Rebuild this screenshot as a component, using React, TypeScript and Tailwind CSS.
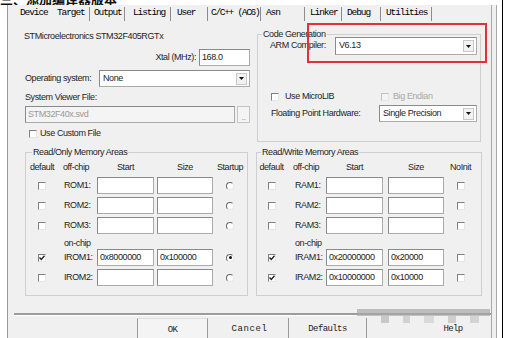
import React from "react";

const tabs = [
  { label: "Device", cls: "w-[37px]", sep: false },
  { label: "Target", cls: "w-[32px]", sep: true },
  { label: "Output", cls: "w-[34px] pl-[4px]", sep: true },
  { label: "Listing", cls: "w-[45px] pl-[8px]", sep: true },
  { label: "User", cls: "w-[36px] pl-[6px]", sep: true },
  { label: "C/C++ (AC6)", cls: "w-[52px] pl-[3px] tracking-[-1.3px]", sep: true },
  { label: "Asn", cls: "w-[43px] pl-[5px]", sep: true },
  { label: "Linker", cls: "w-[36px] pl-[5px]", sep: true },
  { label: "Debug", cls: "w-[38px] pl-[5px]", sep: true },
  { label: "Utilities", cls: "w-[50px] pl-[5px]", sep: true },
];

const romRows = [
  { name: "ROM1:", start: "", size: "", on: false, startup: false },
  { name: "ROM2:", start: "", size: "", on: false, startup: false },
  { name: "ROM3:", start: "", size: "", on: false, startup: false },
];
const iromRows = [
  { name: "IROM1:", start: "0x8000000", size: "0x100000", on: true, startup: true },
  { name: "IROM2:", start: "", size: "", on: false, startup: false },
];
const ramRows = [
  { name: "RAM1:", start: "", size: "", on: false },
  { name: "RAM2:", start: "", size: "", on: false },
  { name: "RAM3:", start: "", size: "", on: false },
];
const iramRows = [
  { name: "IRAM1:", start: "0x20000000", size: "0x20000", on: true },
  { name: "IRAM2:", start: "0x10000000", size: "0x10000", on: true },
];

function Check({ on = false, disabled = false }: { on?: boolean; disabled?: boolean }) {
  return (
    <div
      className={`w-[8px] h-[8px] border border-t-[#808080] border-l-[#808080] border-r-[#e6e6e6] border-b-[#e6e6e6] flex items-center justify-center ${
        disabled ? "bg-[#f4f4f4] border-t-[#c0c0c0] border-l-[#c0c0c0]" : "bg-white"
      }`}
    >
      {on && (
        <svg width="6" height="6" viewBox="0 0 6 6">
          <path d="M0.5 2.5 L2.3 4.5 L5.5 0.8" stroke="#222" strokeWidth="1.4" fill="none" />
        </svg>
      )}
    </div>
  );
}

function Radio({ on = false }: { on?: boolean }) {
  return (
    <div className="w-[8px] h-[8px] rounded-full border border-t-[#6a6a6a] border-l-[#6a6a6a] border-r-[#e8e8e8] border-b-[#e8e8e8] bg-white flex items-center justify-center">
      {on && <div className="w-[3px] h-[3px] rounded-full bg-[#111]" />}
    </div>
  );
}

function Field({ value = "", cls = "", muted = false }: { value?: string; cls?: string; muted?: boolean }) {
  return (
    <div
      className={`h-[17px] border border-[#ababab] border-t-[#8a8a8a] border-l-[#8a8a8a] flex items-center pl-[2px] ${
        muted ? "bg-[#f4f4f4] text-[#9a9a9a]" : "bg-white text-[#1a1a1a]"
      } ${cls}`}
    >
      {value}
    </div>
  );
}

function Drop({ value, cls }: { value: string; cls: string }) {
  return (
    <div className={`border border-[#ababab] border-t-[#8a8a8a] border-l-[#8a8a8a] bg-white flex items-center pl-[3px] pr-[2px] ${cls}`}>
      <span className="flex-1">{value}</span>
      <div className="w-[11px] h-[12px] border border-[#c8c8c8] bg-[#f2f2f2] flex items-center justify-center">
        <svg width="5" height="3" viewBox="0 0 5 3">
          <path d="M0 0 H5 L2.5 3 Z" fill="#111" />
        </svg>
      </div>
    </div>
  );
}

export default function App() {
  return (
    <div className="w-[507px] h-[338px] bg-white flex overflow-hidden relative font-['Liberation_Sans',Arial,sans-serif] text-[9px] tracking-[-0.4px] text-[#1e1e1e]">
      <div className="w-[502px] h-[338px] flex flex-col">
        {/* cut-off caption above the screenshot */}
        <div className="h-[5px] shrink-0 overflow-hidden flex items-end">
          <span className="font-['Noto_Sans_CJK_SC',sans-serif] text-[13px] leading-[13px] font-bold tracking-[0px] text-[#111] whitespace-nowrap">
            三、添加编译器版本
          </span>
        </div>

        <div className="h-[333px] shrink-0 flex">
          <div className="w-[7px]" />
          <div className="w-[484px] h-[333px] bg-[#f0f0f0] border-l border-[#9a9a9a] flex flex-col overflow-hidden">
            {/* tabs */}
            <div className="h-[17px] shrink-0 flex items-center pl-[12px] font-['Liberation_Mono',monospace] text-[9.5px] tracking-[-1.1px] text-[#000]">
              {tabs.map((t) => (
                <React.Fragment key={t.label}>
                  <span className={`${t.cls} whitespace-nowrap`}>{t.label}</span>
                  {t.sep && <div className="w-px h-[14px] bg-[#8c8c8c]" />}
                </React.Fragment>
              ))}
            </div>

            {/* tab page */}
            <div className="h-[291px] shrink-0 pl-[16px] flex flex-col">
              <div className="flex gap-[7px]">
                <div className="w-[226px] flex flex-col">
                  <div className="mt-[9px] h-[12px] flex items-center">STMicroelectronics STM32F405RGTx</div>
                  <div className="mt-[6px] flex items-center justify-end">
                    <span className="mr-[3px]">Xtal (MHz):</span>
                    <Field value="168.0" cls="w-[51px]" />
                  </div>
                  <div className="mt-[4px] flex items-center pl-[1px]">
                    <span className="w-[74px]">Operating system:</span>
                    <Drop value="None" cls="w-[151px] h-[17px]" />
                  </div>
                  <div className="mt-[5px] h-[12px] flex items-center pl-[1px]">System Viewer File:</div>
                  <div className="mt-[2px] flex items-center pl-[1px]">
                    <Field value="STM32F40x.svd" muted cls="w-[210px]" />
                    <div className="ml-[2px] w-[13px] h-[17px] border border-[#c4c4c4] bg-[#f4f4f4] flex items-end justify-center text-[#999] leading-[10px]">
                      ..
                    </div>
                  </div>
                  <div className="mt-[5px] h-[12px] flex items-center pl-[5px]">
                    <Check />
                    <span className="ml-[3px]">Use Custom File</span>
                  </div>
                </div>

                <fieldset className="w-[224px] mt-[7px] border border-[#cfcfcf] pb-[19px]">
                  <legend className="ml-[4px] px-[1px] leading-[10px]">Code Generation</legend>
                  <div className="-mt-[2px] flex items-center pl-[12px]">
                    <span className="w-[65px]">ARM Compiler:</span>
                    <Drop value="V6.13" cls="w-[142px] h-[18px]" />
                  </div>
                  <div className="mt-[36px] h-[12px] flex items-center pl-[13px]">
                    <div className="w-[110px] flex items-center">
                      <Check />
                      <span className="ml-[6px]">Use MicroLIB</span>
                    </div>
                    <Check disabled />
                    <span className="ml-[4px] text-[#a8a8a8]">Big Endian</span>
                  </div>
                  <div className="mt-[2px] flex items-center pl-[13px]">
                    <span className="w-[108px]">Floating Point Hardware:</span>
                    <Drop value="Single Precision" cls="w-[98px] h-[17px]" />
                  </div>
                </fieldset>
              </div>

              <div className="flex mt-[4px]">
                <fieldset className="ml-[1px] w-[223px] border border-[#cfcfcf] pb-[9px]">
                  <legend className="ml-[6px] px-[1px] leading-[12px]">Read/Only Memory Areas</legend>
                  <div className="mt-[3px] h-[13px] grid grid-cols-[32px_39px_60px_56px_34px] items-center">
                    <span className="text-center">default</span>
                    <span className="pl-[5px]">off-chip</span>
                    <span className="text-center pr-[3px]">Start</span>
                    <span className="text-center">Size</span>
                    <span className="text-center">Startup</span>
                  </div>
                  {romRows.map((r) => (
                    <div key={r.name} className="mt-[3px] h-[17px] grid grid-cols-[32px_39px_60px_56px_34px] items-center">
                      <div className="flex justify-center"><Check on={r.on} /></div>
                      <span className="pl-[6px]">{r.name}</span>
                      <Field value={r.start} cls="w-[57px]" />
                      <Field value={r.size} cls="w-[56px]" />
                      <div className="flex justify-center"><Radio on={r.startup} /></div>
                    </div>
                  ))}
                  <div className="mt-[4px] h-[11px] flex items-center pl-[38px]">on-chip</div>
                  {iromRows.map((r, i) => (
                    <div key={r.name} className={`${i ? "mt-[3px]" : ""} h-[17px] grid grid-cols-[32px_39px_60px_56px_34px] items-center`}>
                      <div className="flex justify-center"><Check on={r.on} /></div>
                      <span className="pl-[6px]">{r.name}</span>
                      <Field value={r.start} cls="w-[57px]" />
                      <Field value={r.size} cls="w-[56px]" />
                      <div className="flex justify-center"><Radio on={r.startup} /></div>
                    </div>
                  ))}
                </fieldset>

                <fieldset className="ml-[8px] w-[226px] border border-[#cfcfcf] pb-[9px]">
                  <legend className="ml-[4px] px-[1px] leading-[12px]">Read/Write Memory Areas</legend>
                  <div className="mt-[3px] h-[13px] grid grid-cols-[29px_40px_62px_56px_33px] items-center">
                    <span className="text-center">default</span>
                    <span className="pl-[7px]">off-chip</span>
                    <span className="text-center pr-[5px]">Start</span>
                    <span className="text-center">Size</span>
                    <span className="text-center">NoInit</span>
                  </div>
                  {ramRows.map((r) => (
                    <div key={r.name} className="mt-[3px] h-[17px] grid grid-cols-[29px_40px_62px_56px_33px] items-center">
                      <div className="flex justify-center"><Check on={r.on} /></div>
                      <span className="pl-[9px]">{r.name}</span>
                      <Field value={r.start} cls="w-[57px]" />
                      <Field value={r.size} cls="w-[56px]" />
                      <div className="flex justify-center"><Check /></div>
                    </div>
                  ))}
                  <div className="mt-[4px] h-[11px] flex items-center pl-[38px]">on-chip</div>
                  {iramRows.map((r, i) => (
                    <div key={r.name} className={`${i ? "mt-[3px]" : ""} h-[17px] grid grid-cols-[29px_40px_62px_56px_33px] items-center`}>
                      <div className="flex justify-center"><Check on={r.on} /></div>
                      <span className="pl-[9px]">{r.name}</span>
                      <Field value={r.start} cls="w-[57px]" />
                      <Field value={r.size} cls="w-[56px]" />
                      <div className="flex justify-center"><Check /></div>
                    </div>
                  ))}
                </fieldset>
              </div>
            </div>

            {/* separator + buttons */}
            <div className="ml-[6px] h-[2px] shrink-0 bg-[#9c9c9c]" />
            <div className="h-px shrink-0 ml-[6px] bg-white" />
            <div className="flex-1 min-h-0 flex pt-[2px] font-['Liberation_Mono',monospace] text-[9px] tracking-[-0.6px] text-[#222]">
              <div className="ml-[129px] w-[71px] h-[24px] border border-b-0 border-[#9a9a9a] border-t-[#e0e0e0] bg-[#f4f4f4] flex items-center justify-center">OK</div>
              <div className="ml-[3px] w-[78px] h-[24px] border-r border-[#9a9a9a] flex items-center justify-center tracking-[0.6px]">Cancel</div>
              <div className="w-[78px] h-[24px] border-r border-[#9a9a9a] flex items-center justify-center">Defaults</div>
              <div className="ml-[48px] flex-1 h-[24px] flex items-center justify-center">Help</div>
            </div>
          </div>
          <div className="w-[6px] bg-[#f0f0f0] border-x border-[#a8a8a8]" />
          <div className="w-[5px]" />
        </div>
      </div>
      <div className="w-px bg-black" />

      {/* red highlight around compiler selector */}
      <div className="absolute left-[307px] top-[23px] w-[180px] h-[40px] border-2 border-[#e0323c]" />

      {/* watermark smear near the buttons */}
      <div className="absolute left-[357px] top-[309px] w-[133px] flex flex-col opacity-70">
        <div className="h-[7px] bg-[#a8a8a8]" />
        <div className="h-[7px] flex gap-[14px] pl-[24px]">
          <div className="w-[8px] bg-[#b8b8b8]" />
          <div className="w-[7px] bg-[#c4c4c4]" />
          <div className="w-[10px] bg-[#d0d0d0]" />
          <div className="w-[8px] bg-[#c0c0c0]" />
          <div className="w-[9px] bg-[#c8c8c8]" />
        </div>
      </div>
    </div>
  );
}
